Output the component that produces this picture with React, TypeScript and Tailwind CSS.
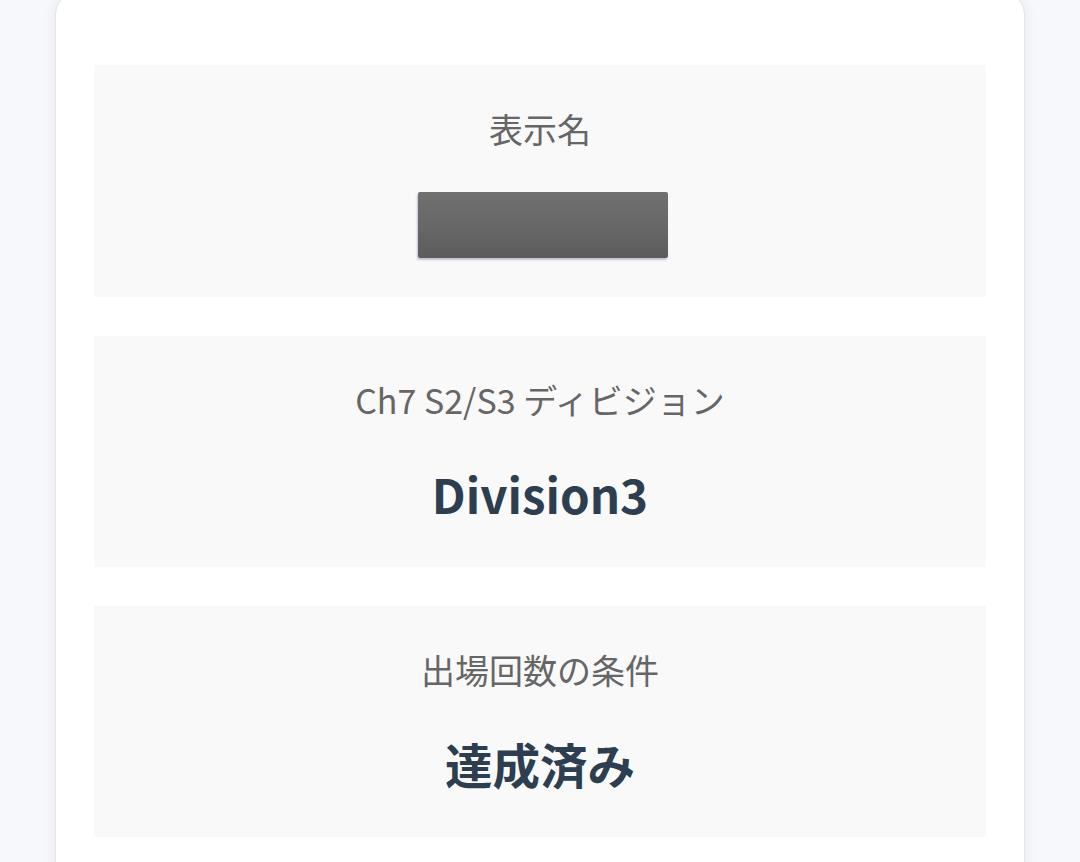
import React from 'react';

type Stat = {
  label: string;
  value?: string;
  hidden?: boolean;
};

const stats: Stat[] = [
  { label: '表示名', hidden: true },
  { label: 'Ch7 S2/S3 ディビジョン', value: 'Division3' },
  { label: '出場回数の条件', value: '達成済み' },
];

function StatBlock({ stat }: { stat: Stat }) {
  return (
    <div className="flex flex-col items-center bg-[#f9f9f9] py-[39px]">
      <p className="text-[34px] leading-[50px] text-[#666666]">{stat.label}</p>
      {stat.hidden ? (
        // 名前は伏せ字
        <div className="ml-[6px] mt-[38px] h-[66px] w-[250px] rounded-[2px] bg-gradient-to-b from-[#707070] via-[#686868] to-[#5c5c5c] shadow-[-1px_2px_2px_rgba(60,70,140,0.3)]" />
      ) : (
        <p className="mt-[35px] text-[47.5px] font-bold leading-[68px] text-[#2c3e50]">{stat.value}</p>
      )}
    </div>
  );
}

export default function App() {
  return (
    <div
      className="h-screen overflow-hidden bg-[#f7f8fc] px-[55px]"
      style={{ fontFamily: '"Noto Sans CJK JP", "Noto Sans", sans-serif' }}
    >
      <div className="-mt-[9px] flex flex-col gap-[39px] rounded-[24px] border border-[#e4e5ea] bg-white px-[38px] pb-[120px] pt-[73px] shadow-[0_0_14px_rgba(0,0,0,0.07)]">
        {stats.map((s) => (
          <StatBlock key={s.label} stat={s} />
        ))}
      </div>
    </div>
  );
}
